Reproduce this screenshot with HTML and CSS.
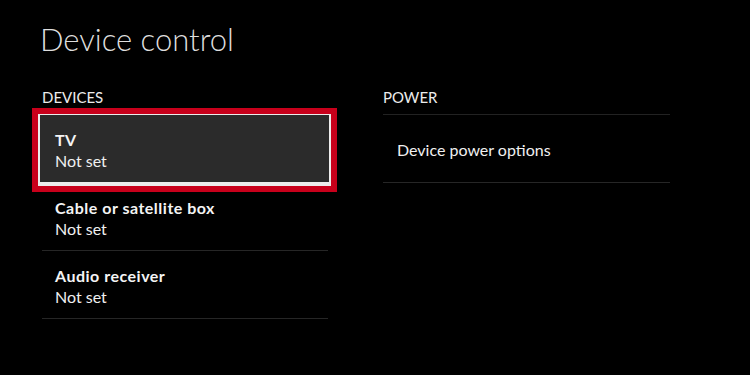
FILE: index.html
```html
<!DOCTYPE html>
<html lang="en">
<head>
<meta charset="utf-8">
<title>Device control</title>
<link rel="stylesheet" href="styles.css">
</head>
<body>
<main class="page">
  <h1 class="title">Device control</h1>
  <div class="columns">
    <section class="column">
      <h2 class="label">DEVICES</h2>
      <ul class="list">
        <li class="row row-focused">
          <span class="row-name">TV</span>
          <span class="row-value">Not set</span>
        </li>
        <li class="row">
          <span class="row-name">Cable or satellite box</span>
          <span class="row-value">Not set</span>
        </li>
        <li class="row">
          <span class="row-name">Audio receiver</span>
          <span class="row-value">Not set</span>
        </li>
      </ul>
    </section>
    <section class="column">
      <h2 class="label">POWER</h2>
      <ul class="list">
        <li class="row row-single">
          <span class="row-value">Device power options</span>
        </li>
      </ul>
    </section>
  </div>
</main>
</body>
</html>
```
FILE: styles.css
```css
html, body {
  margin: 0;
  padding: 0;
  background: #000;
}

body {
  width: 750px;
  height: 375px;
  overflow: hidden;
  font-family: Lato, "Open Sans", sans-serif;
  color: #f2f2f2;
}

.page {
  padding: 19px 0 0 40px;
}

.title {
  margin: 0;
  font-size: 31px;
  line-height: 40px;
  font-weight: 300;
  color: #dedede;
}

.columns {
  display: flex;
  gap: 55px;
  margin-top: 29px;
  padding-left: 2px;
}

.column {
  width: 286px;
}

.column + .column {
  width: 287px;
}

.label {
  margin: 0 0 8px;
  font-size: 15px;
  line-height: 18px;
  font-weight: 400;
  color: #ececec;
}

.list {
  list-style: none;
  margin: 0;
  padding: 0;
  border-top: 1px solid #222;
}

.row {
  box-sizing: border-box;
  height: 68px;
  padding: 14px 0 0 13px;
  border-bottom: 1px solid #262626;
  display: flex;
  flex-direction: column;
}

.row-name {
  font-size: 16px;
  line-height: 21px;
  font-weight: 700;
  letter-spacing: 0.5px;
  color: #f4f4f4;
}

.row-value {
  font-size: 16px;
  line-height: 21px;
  font-weight: 400;
  color: #f0f0f0;
}

.row-focused {
  position: relative;
  height: 72px;
  margin: -1px -3px -3px -4px;
  padding: 14px 0 0 15px;
  background: #2b2b2b;
  border: 2px solid #ececec;
  border-top-width: 1px;
  border-bottom-width: 4px;
  outline: 6px solid #c8001b;
}

.row-single {
  padding: 24px 0 0 14px;
}
```
